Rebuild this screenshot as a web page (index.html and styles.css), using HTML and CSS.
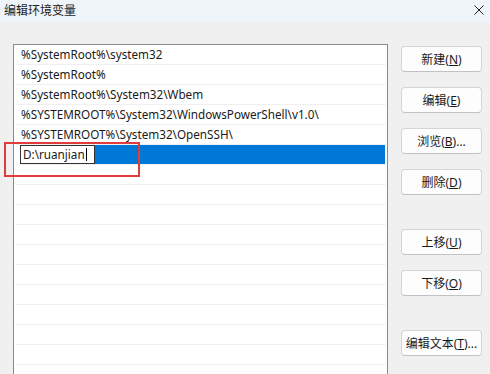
FILE: index.html
```html
<!DOCTYPE html>
<html lang="zh-CN">
<head>
    <meta charset="UTF-8">
    <title>编辑环境变量</title>
    <link rel="stylesheet" href="styles.css">
</head>
<body>

<!-- Title bar -->
<div class="titlebar">
    <span class="title">编辑环境变量</span>
    <svg class="close" width="10" height="10" viewBox="0 0 10 10">
        <path d="M0.5 0.5 L9.5 9.5 M9.5 0.5 L0.5 9.5" stroke="#222" stroke-width="1" fill="none"/>
    </svg>
</div>

<div class="dialog">
    <!-- Path list -->
    <div class="pathlist">
        <div class="row">%SystemRoot%\system32</div>
        <div class="row">%SystemRoot%</div>
        <div class="row">%SystemRoot%\System32\Wbem</div>
        <div class="row">%SYSTEMROOT%\System32\WindowsPowerShell\v1.0\</div>
        <div class="row">%SYSTEMROOT%\System32\OpenSSH\</div>
        <div class="row selected">
            <span class="editor">D:\ruanjian<span class="caret"></span></span>
            <span class="fill"></span>
        </div>
        <div class="row"></div>
        <div class="row"></div>
        <div class="row"></div>
        <div class="row"></div>
        <div class="row"></div>
        <div class="row"></div>
        <div class="row"></div>
        <div class="row"></div>
        <div class="row"></div>
        <div class="row"></div>
    </div>

    <!-- Buttons -->
    <div class="buttons">
        <button>新建(<u>N</u>)</button>
        <button>编辑(<u>E</u>)</button>
        <button>浏览(<u>B</u>)...</button>
        <button>删除(<u>D</u>)</button>
        <button class="gap">上移(<u>U</u>)</button>
        <button>下移(<u>O</u>)</button>
        <button class="gap">编辑文本(<u>T</u>)...</button>
    </div>
</div>

<!-- Red highlight box -->
<div class="highlight"></div>

</body>
</html>
```

FILE: styles.css
```css
body {
    margin: 0;
    background-color: #f0f0f0;
    font-family: "Noto Sans", "Noto Sans CJK SC", sans-serif;
    font-size: 12px;
    color: #1a1a1a;
    overflow: hidden;
    height: 374px;
}

.titlebar {
    box-sizing: border-box;
    height: 22px;
    background-color: #eff4f9;
    display: flex;
    align-items: center;
    justify-content: space-between;
    padding: 0 6px 2px 4px;
}

.title {
    font-size: 12px;
    color: #222;
}

.dialog {
    display: flex;
    padding: 22px 0 0 13px;
}

.pathlist {
    width: 371px;
    height: 340px;
    background-color: #fff;
    border: 1px solid #8a8a8a;
    border-bottom: none;
    padding: 0 1px;
}

.row {
    height: 19px;
    line-height: 19px;
    border-bottom: 1px solid #f0f0f0;
    padding-left: 6px;
    font-size: 11.7px;
    white-space: nowrap;
}

.row.selected {
    display: flex;
    padding-left: 5px;
    padding-right: 1px;
}

.editor {
    box-sizing: border-box;
    width: 75px;
    height: 19px;
    border: 1px solid #333;
    background-color: #fff;
    padding-left: 2px;
    line-height: 17px;
    display: flex;
    align-items: center;
}

.caret {
    display: inline-block;
    width: 1px;
    height: 13px;
    background-color: #000;
    margin-left: 1px;
}

.fill {
    flex: 1;
    background-color: #0078d7;
}

.buttons {
    display: flex;
    flex-direction: column;
    gap: 15px;
    margin-left: 13px;
    padding-top: 2px;
}

button {
    width: 81px;
    height: 26px;
    background-color: #fdfdfd;
    border: 1px solid #d4d4d4;
    border-bottom-color: #c2c2c2;
    border-radius: 4px;
    font-family: "Noto Sans", "Noto Sans CJK SC", sans-serif;
    font-size: 12px;
    color: #1a1a1a;
    padding: 0;
}

button.gap {
    margin-top: 19px;
}

.highlight {
    position: absolute;
    left: 4px;
    top: 142px;
    width: 132px;
    height: 31px;
    border: 2px solid #e23b3b;
}
```
